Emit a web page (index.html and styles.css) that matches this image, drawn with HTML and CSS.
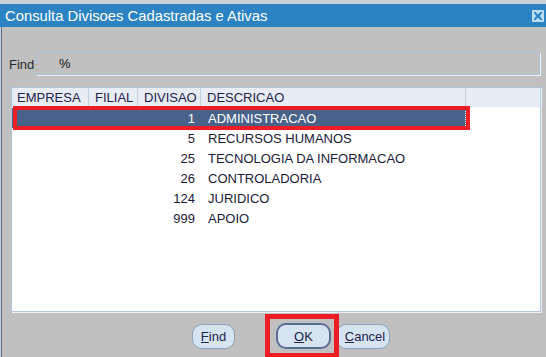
FILE: index.html
```html
<!DOCTYPE html>
<html>
<head>
<meta charset="utf-8">
<link rel="stylesheet" href="styles.css">
</head>
<body>
<div class="window">
  <div class="titlebar">
    <span class="title">Consulta Divisoes Cadastradas e Ativas</span>
    <span class="close">
      <svg width="12" height="12" viewBox="0 0 12 12">
        <rect x="0" y="0" width="12" height="12" fill="#b9dbf5"/>
        <path d="M3 3 L9 9 M9 3 L3 9" stroke="#2b7fc0" stroke-width="2" fill="none"/>
        <path d="M2 2h2v1H2zM8 2h2v1H8zM2 9h2v1H2zM8 9h2v1H8z" fill="#2b7fc0"/>
      </svg>
    </span>
  </div>
  <div class="content">
    <div class="find-row">
      <span class="find-label">Find</span><span class="colon">:</span>
      <div class="find-field">%</div>
    </div>
    <div class="grid">
      <div class="grid-head">
        <div class="hcell">EMPRESA</div>
        <div class="hcell">FILIAL</div>
        <div class="hcell">DIVISAO</div>
        <div class="hcell">DESCRICAO</div>
        <div class="hcell last"></div>
      </div>
      <div class="grid-body">
        <div class="row selected">
          <div class="cell"></div><div class="cell"></div><div class="cell num">1</div><div class="cell desc">ADMINISTRACAO</div><div class="cell blank"></div>
        </div>
        <div class="row">
          <div class="cell"></div><div class="cell"></div><div class="cell num">5</div><div class="cell desc">RECURSOS HUMANOS</div><div class="cell blank"></div>
        </div>
        <div class="row">
          <div class="cell"></div><div class="cell"></div><div class="cell num">25</div><div class="cell desc">TECNOLOGIA DA INFORMACAO</div><div class="cell blank"></div>
        </div>
        <div class="row">
          <div class="cell"></div><div class="cell"></div><div class="cell num">26</div><div class="cell desc">CONTROLADORIA</div><div class="cell blank"></div>
        </div>
        <div class="row">
          <div class="cell"></div><div class="cell"></div><div class="cell num">124</div><div class="cell desc">JURIDICO</div><div class="cell blank"></div>
        </div>
        <div class="row">
          <div class="cell"></div><div class="cell"></div><div class="cell num">999</div><div class="cell desc">APOIO</div><div class="cell blank"></div>
        </div>
      </div>
    </div>
    <div class="buttons">
      <button class="btn btn-find"><u>F</u>ind</button>
      <button class="btn btn-ok"><u>O</u>K</button>
      <button class="btn btn-cancel"><u>C</u>ancel</button>
    </div>
  </div>
</div>
</body>
</html>
```

FILE: styles.css
```css
html, body {
  margin: 0;
  padding: 0;
}
body {
  width: 546px;
  height: 357px;
  background: #c8d0dc;
  overflow: hidden;
  font-family: "Liberation Sans", Arial, sans-serif;
}
.window {
  margin-top: 4px;
  height: 353px;
  display: flex;
  flex-direction: column;
}
.titlebar {
  height: 23px;
  background: #2b83c3;
  display: flex;
  align-items: center;
  justify-content: space-between;
  padding: 0 2px 0 5px;
}
.title {
  color: #ffffff;
  font-size: 14.8px;
  line-height: 23px;
  padding-top: 1px;
}
.close {
  width: 12px;
  height: 12px;
  display: flex;
  margin-top: 1px;
}
.content {
  flex: 1;
  background: #c0c0c0;
  margin-left: 1px;
  border-left: 1px solid #5a6a92;
  display: flex;
  flex-direction: column;
  padding: 25px 5px 0 6px;
}
.find-row {
  display: flex;
  align-items: center;
  height: 23px;
}
.find-label {
  font-size: 13px;
  color: #2a2a2a;
  width: 27px;
  padding-left: 1px;
  padding-top: 1px;
}
.colon {
  color: #c89020;
  font-size: 11px;
  width: 0;
  position: relative;
  left: -1px;
  top: 2px;
}
.find-field {
  flex: 1;
  height: 21px;
  border: 1px solid #b0c0d8;
  box-shadow: 1px 1px 0 #eef3fa;
  font-size: 13px;
  color: #111111;
  line-height: 22px;
  padding-left: 22px;
  margin-right: 1px;
}
.grid {
  margin-top: 12px;
  margin-left: 3px;
  width: 528px;
  height: 223px;
  border: 1px solid #b4c4dc;
  box-shadow: 1px 1px 0 #eef3fa;
  background: #ffffff;
  display: flex;
  flex-direction: column;
}
.grid-head, .row {
  display: grid;
  grid-template-columns: 77px 49px 63px 265px 1fr;
}
.grid-head {
  height: 19px;
  background: #e8edf5;
  border-bottom: 1px solid #f4f6fa;
}
.hcell {
  border-right: 1px solid #c4cedc;
  font-size: 13px;
  color: #22224a;
  line-height: 20px;
  padding-left: 6px;
  white-space: nowrap;
}
.hcell:first-child {
  padding-left: 5px;
}
.hcell.last {
  border-right: none;
}
.row {
  height: 20px;
  position: relative;
}
.cell {
  font-size: 13px;
  color: #1a1a3a;
  line-height: 20px;
  padding-top: 1px;
  height: 19px;
  white-space: nowrap;
}
.num {
  text-align: right;
  padding-right: 6px;
}
.desc {
  padding-left: 7px;
}
.row.selected .cell {
  background: #48638a;
  color: #ffffff;
}
.row.selected .desc {
  border-right: 1px dotted #ffffff;
}
.row.selected .cell.blank {
  background: #ffffff;
}
.row.selected::after {
  content: "";
  position: absolute;
  left: 1px;
  top: -2px;
  width: 449px;
  height: 16px;
  border: 4px solid #ee1c25;
}
.buttons {
  display: flex;
  align-items: center;
  padding-left: 184px;
  margin-top: 11px;
}
.btn {
  font-family: "Liberation Sans", Arial, sans-serif;
  font-size: 13px;
  color: #22224a;
  background: #d6e4f2;
  border: 1px solid #8ea0bc;
  border-radius: 10px;
  height: 25px;
  padding: 0;
  position: relative;
}
.btn u {
  text-decoration: underline;
}
.btn-find {
  width: 43px;
  margin-right: 41px;
}
.btn-ok {
  width: 55px;
  height: 26px;
  border: 2px solid #5a6e94;
  margin-right: 5px;
  z-index: 1;
}
.btn-ok::after {
  content: "";
  position: absolute;
  left: -13px;
  top: -11px;
  width: 64px;
  height: 34px;
  border: 5px solid #ee1c25;
}
.btn-cancel {
  width: 54px;
  padding-left: 4px;
}
```
